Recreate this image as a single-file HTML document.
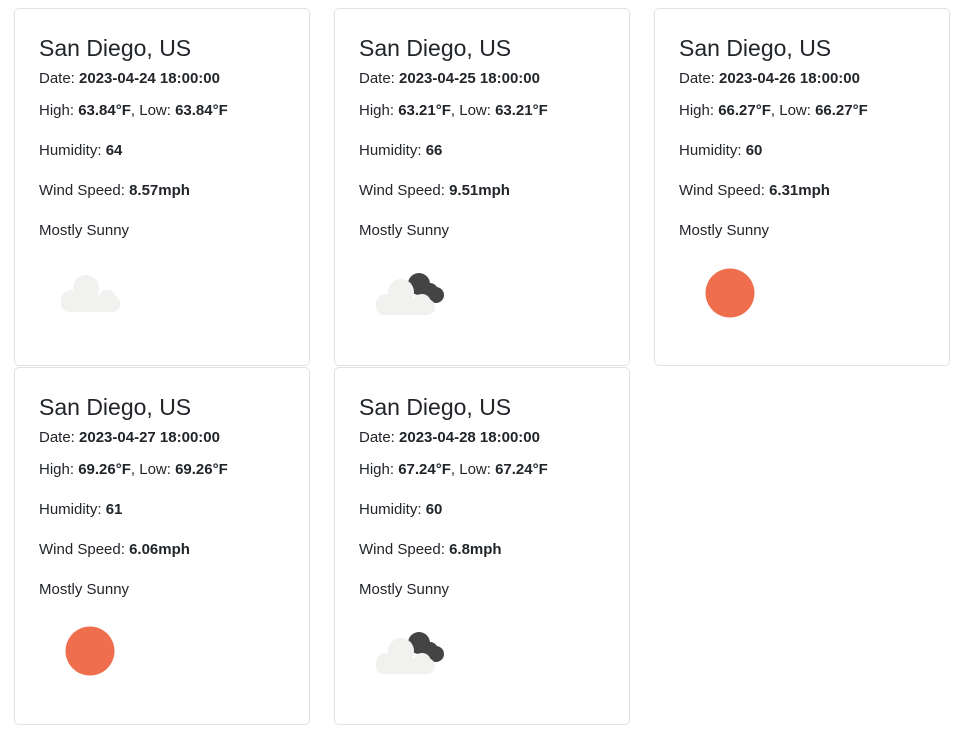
<!DOCTYPE html>
<html><head><style>
body{margin:0;background:#fff;font-family:"Liberation Sans",sans-serif;color:#212529;}
.c{position:absolute;width:294px;height:356px;border:1px solid #dfe1e4;border-radius:5px;box-sizing:content-box;}
.t{position:absolute;left:24px;white-space:nowrap;font-size:15px;}
.h{font-size:23px;top:26px;}
b{font-weight:bold;}
svg{position:absolute;left:0;top:0;}
</style></head><body>

<div class="c" style="left:14px;top:8px">
<div class="t h">San Diego, US</div>
<div class="t" style="top:61px">Date: <b>2023-04-24 18:00:00</b></div>
<div class="t" style="top:93px">High: <b>63.84°F</b>, Low: <b>63.84°F</b></div>
<div class="t" style="top:133px">Humidity: <b>64</b></div>
<div class="t" style="top:173px">Wind Speed: <b>8.57mph</b></div>
<div class="t" style="top:213px">Mostly Sunny</div>
<svg width="296" height="358"><g fill="#f1f1f0"><circle cx="71" cy="279" r="13"/><circle cx="56" cy="291" r="10"/><circle cx="92" cy="290" r="9"/><rect x="46" y="286" width="59" height="17" rx="8"/></g></svg>
</div>

<div class="c" style="left:334px;top:8px">
<div class="t h">San Diego, US</div>
<div class="t" style="top:61px">Date: <b>2023-04-25 18:00:00</b></div>
<div class="t" style="top:93px">High: <b>63.21°F</b>, Low: <b>63.21°F</b></div>
<div class="t" style="top:133px">Humidity: <b>66</b></div>
<div class="t" style="top:173px">Wind Speed: <b>9.51mph</b></div>
<div class="t" style="top:213px">Mostly Sunny</div>
<svg width="296" height="358"><g fill="#444"><circle cx="84" cy="275" r="11"/><circle cx="95" cy="282" r="8"/><circle cx="101" cy="286" r="8"/></g><g fill="#f1f1f0"><circle cx="66" cy="283" r="13"/><circle cx="51" cy="295" r="10"/><circle cx="87" cy="294" r="9"/><rect x="41" y="290" width="59" height="16" rx="8"/></g></svg>
</div>

<div class="c" style="left:654px;top:8px">
<div class="t h">San Diego, US</div>
<div class="t" style="top:61px">Date: <b>2023-04-26 18:00:00</b></div>
<div class="t" style="top:93px">High: <b>66.27°F</b>, Low: <b>66.27°F</b></div>
<div class="t" style="top:133px">Humidity: <b>60</b></div>
<div class="t" style="top:173px">Wind Speed: <b>6.31mph</b></div>
<div class="t" style="top:213px">Mostly Sunny</div>
<svg width="296" height="358"><circle cx="75" cy="284" r="24.5" fill="#ef6e4e"/></svg>
</div>

<div class="c" style="left:14px;top:367px">
<div class="t h">San Diego, US</div>
<div class="t" style="top:61px">Date: <b>2023-04-27 18:00:00</b></div>
<div class="t" style="top:93px">High: <b>69.26°F</b>, Low: <b>69.26°F</b></div>
<div class="t" style="top:133px">Humidity: <b>61</b></div>
<div class="t" style="top:173px">Wind Speed: <b>6.06mph</b></div>
<div class="t" style="top:213px">Mostly Sunny</div>
<svg width="296" height="358"><circle cx="75" cy="283" r="24.5" fill="#ef6e4e"/></svg>
</div>

<div class="c" style="left:334px;top:367px">
<div class="t h">San Diego, US</div>
<div class="t" style="top:61px">Date: <b>2023-04-28 18:00:00</b></div>
<div class="t" style="top:93px">High: <b>67.24°F</b>, Low: <b>67.24°F</b></div>
<div class="t" style="top:133px">Humidity: <b>60</b></div>
<div class="t" style="top:173px">Wind Speed: <b>6.8mph</b></div>
<div class="t" style="top:213px">Mostly Sunny</div>
<svg width="296" height="358"><g fill="#444"><circle cx="84" cy="275" r="11"/><circle cx="95" cy="282" r="8"/><circle cx="101" cy="286" r="8"/></g><g fill="#f1f1f0"><circle cx="66" cy="283" r="13"/><circle cx="51" cy="295" r="10"/><circle cx="87" cy="294" r="9"/><rect x="41" y="290" width="59" height="16" rx="8"/></g></svg>
</div>

</body></html>
